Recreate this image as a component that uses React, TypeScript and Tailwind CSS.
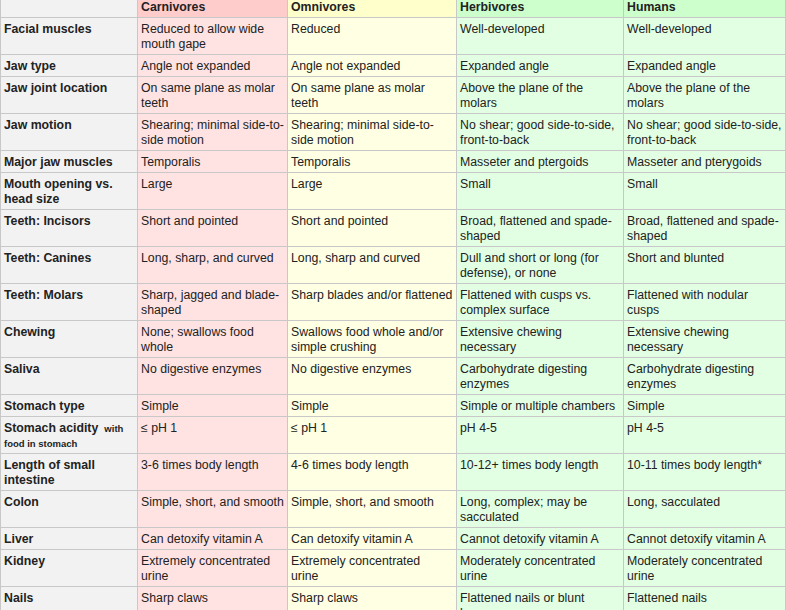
import React from "react";

type Row = { label: React.ReactNode; c: React.ReactNode; o: React.ReactNode; h: React.ReactNode; m: React.ReactNode };

const rows: Row[] = [
  { label: "Facial muscles", c: "Reduced to allow wide mouth gape", o: "Reduced", h: "Well-developed", m: "Well-developed" },
  { label: "Jaw type", c: "Angle not expanded", o: "Angle not expanded", h: "Expanded angle", m: "Expanded angle" },
  { label: "Jaw joint location", c: "On same plane as molar teeth", o: "On same plane as molar teeth", h: "Above the plane of the molars", m: "Above the plane of the molars" },
  { label: "Jaw motion", c: "Shearing; minimal side-to-side motion", o: "Shearing; minimal side-to-side motion", h: "No shear; good side-to-side, front-to-back", m: "No shear; good side-to-side, front-to-back" },
  { label: "Major jaw muscles", c: "Temporalis", o: "Temporalis", h: "Masseter and ptergoids", m: "Masseter and pterygoids" },
  { label: "Mouth opening vs. head size", c: "Large", o: "Large", h: "Small", m: "Small" },
  { label: "Teeth: Incisors", c: "Short and pointed", o: "Short and pointed", h: "Broad, flattened and spade-shaped", m: "Broad, flattened and spade-shaped" },
  { label: "Teeth: Canines", c: "Long, sharp, and curved", o: "Long, sharp and curved", h: "Dull and short or long (for defense), or none", m: "Short and blunted" },
  { label: "Teeth: Molars", c: "Sharp, jagged and blade-shaped", o: "Sharp blades and/or flattened", h: "Flattened with cusps vs. complex surface", m: "Flattened with nodular cusps" },
  { label: "Chewing", c: "None; swallows food whole", o: "Swallows food whole and/or simple crushing", h: "Extensive chewing necessary", m: "Extensive chewing necessary" },
  { label: "Saliva", c: "No digestive enzymes", o: "No digestive enzymes", h: "Carbohydrate digesting enzymes", m: "Carbohydrate digesting enzymes" },
  { label: "Stomach type", c: "Simple", o: "Simple", h: "Simple or multiple chambers", m: "Simple" },
  {
    label: (
      <>
        Stomach acidity <span className="text-[9.5px]">&nbsp;with food in stomach</span>
      </>
    ),
    c: "≤ pH 1",
    o: "≤ pH 1",
    h: "pH 4-5",
    m: "pH 4-5",
  },
  { label: "Length of small intestine", c: "3-6 times body length", o: "4-6 times body length", h: "10-12+ times body length", m: "10-11 times body length*" },
  { label: "Colon", c: "Simple, short, and smooth", o: "Simple, short, and smooth", h: "Long, complex; may be sacculated", m: "Long, sacculated" },
  { label: "Liver", c: "Can detoxify vitamin A", o: "Can detoxify vitamin A", h: "Cannot detoxify vitamin A", m: "Cannot detoxify vitamin A" },
  {
    label: "Kidney",
    c: "Extremely concentrated urine",
    o: (
      <>
        Extremely concentrated
        <br />
        urine
      </>
    ),
    h: "Moderately concentrated urine",
    m: "Moderately concentrated urine",
  },
  { label: "Nails", c: "Sharp claws", o: "Sharp claws", h: "Flattened nails or blunt hooves", m: "Flattened nails" },
];

const cell = "border border-[#c8c8c8] px-[3px] pt-[4px] pb-[2px] align-top leading-[15px]";

export default function App() {
  return (
    <div className="w-[786px] h-[610px] overflow-hidden bg-white">
      <table
        className="-mt-[5px] w-[785px] table-fixed border-collapse text-[12.3px] text-[#222222]"
        style={{ fontFamily: '"Liberation Sans", Arial, sans-serif' }}
      >
        <colgroup>
          <col className="w-[137px]" />
          <col className="w-[150px]" />
          <col className="w-[169px]" />
          <col className="w-[167px]" />
          <col className="w-[162px]" />
        </colgroup>
        <thead>
          <tr>
            <th className={`${cell} bg-[#f2f2f2] text-left`}></th>
            <th className={`${cell} bg-[#ffcccc] text-left font-bold`}>Carnivores</th>
            <th className={`${cell} bg-[#ffffcc] text-left font-bold`}>Omnivores</th>
            <th className={`${cell} bg-[#ccffcc] text-left font-bold`}>Herbivores</th>
            <th className={`${cell} bg-[#ccffcc] text-left font-bold`}>Humans</th>
          </tr>
        </thead>
        <tbody>
          {rows.map((r, i) => (
            <tr key={i}>
              <td className={`${cell} bg-[#f2f2f2] font-bold`}>{r.label}</td>
              <td className={`${cell} bg-[#ffe3e3]`}>{r.c}</td>
              <td className={`${cell} bg-[#ffffe3]`}>{r.o}</td>
              <td className={`${cell} bg-[#e3ffe3]`}>{r.h}</td>
              <td className={`${cell} bg-[#e3ffe3]`}>{r.m}</td>
            </tr>
          ))}
        </tbody>
      </table>
    </div>
  );
}
